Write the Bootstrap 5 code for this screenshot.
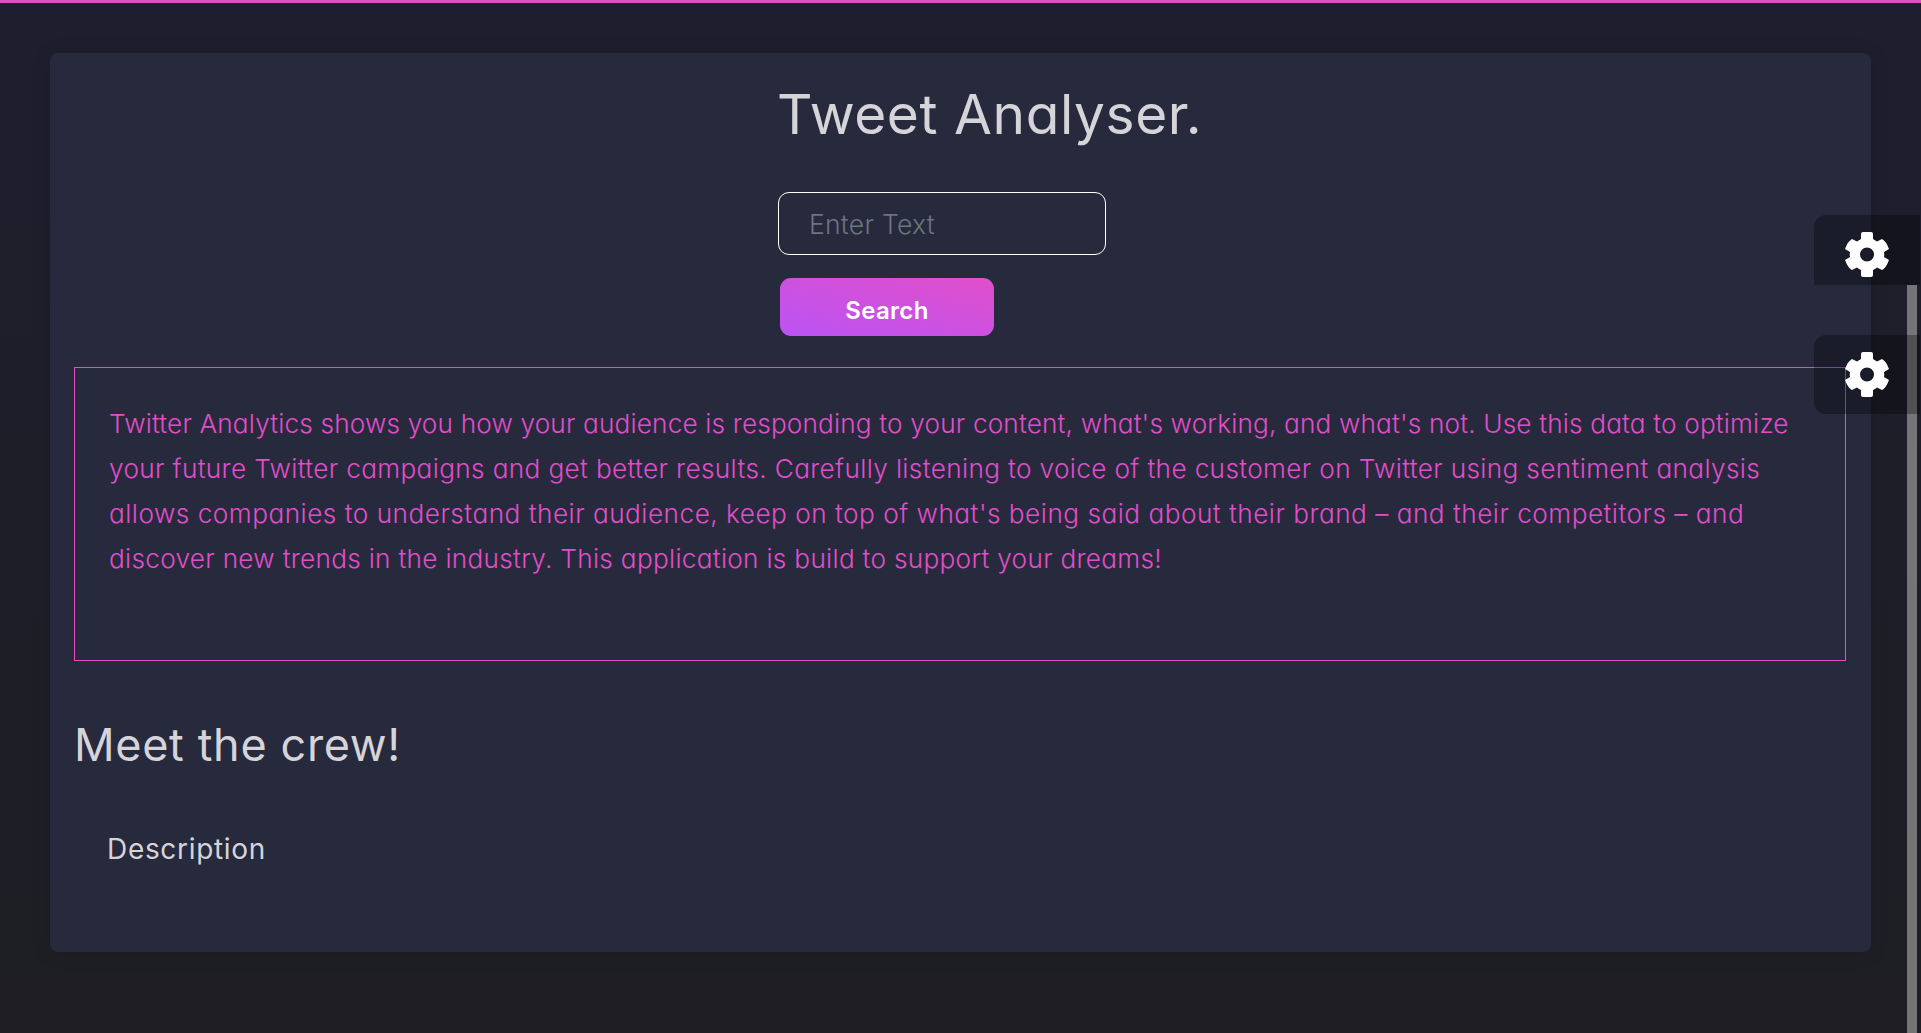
<!DOCTYPE html>
<html lang="en">
<head>
<meta charset="utf-8">
<meta name="viewport" content="width=device-width, initial-scale=1">
<title>Tweet Analyser</title>
<link href="https://cdn.jsdelivr.net/npm/bootstrap@5.3.0/dist/css/bootstrap.min.css" rel="stylesheet">
<style>
html,body{height:100%}
body{margin:0;overflow:hidden;background:#1e1e2c;font-family:Inter,"Open Sans",sans-serif;font-feature-settings:"cv11";color:#d5d4d9}
.main-panel{height:1033px;padding:50px 50px 0;border-top:3px solid #e14eca;background:linear-gradient(#1f1e2e,#1e1e24)}
.panel-card{height:899px;background:#27293d;border:0;border-radius:8px;box-shadow:0 1px 20px rgba(0,0,0,.1);padding:0 25px 0 24px;color:inherit}
.search-area{margin-left:704px;height:314px;padding-top:29px}
.title-main{font-size:55px;font-weight:400;line-height:64px;margin:0 0 46px -1px;letter-spacing:.57px}
.field-text,.field-text:focus{width:328px;height:63px;border:1px solid #fff;border-radius:11px;background:transparent;color:#fff;font-size:26.5px;font-weight:300;padding:0 30px;letter-spacing:.25px}
.field-text::placeholder{color:#6c757d;opacity:1}
.btn-search{width:214px;height:58px;margin:23px 0 0 2px;border:0;border-radius:11px;font-size:24px;font-weight:600;color:#fff;padding:8px 0 0;letter-spacing:.3px;background:linear-gradient(to bottom left,#e14eca,#ba54f5)}
.about-box{height:294px;border:1px solid #e14eca;padding:33px 34px 0;color:#e14eca;font-size:26.2px;font-weight:300;line-height:45px}
.about-box span{white-space:nowrap;align-self:flex-start}
.line-a{letter-spacing:.16px}
.line-b{letter-spacing:.35px}
.line-c{letter-spacing:.49px}
.line-d{letter-spacing:.29px}
.crew-title{font-size:45px;font-weight:400;line-height:52px;margin:58px 0 0;letter-spacing:.65px}
.crew-desc{font-size:28px;font-weight:400;line-height:36px;margin:60px 0 0 33px;letter-spacing:.68px}
.gear-tab{position:absolute;z-index:3;left:1814px;width:106px;background:rgba(0,0,0,.3);padding:17px 0 0 31px}
.gear-a{top:215px;height:70px;border-radius:12px 0 0 1px}
.gear-b{top:335px;height:79px;border-radius:12px 0 0 12px}
.gear-tab svg{display:block}
.scroll-thumb{position:absolute;z-index:2;left:1907px;top:285px;width:10px;height:748px;background:#757477}
</style>
<script src="https://cdn.jsdelivr.net/npm/bootstrap@5.3.0/dist/js/bootstrap.bundle.min.js"></script>
</head>
<body class="position-relative">
<main class="main-panel">
  <section class="card panel-card">
    <form class="search-area d-flex flex-column align-items-start" onsubmit="return false">
      <h1 class="title-main">Tweet Analyser.</h1>
      <input class="form-control field-text" type="text" placeholder="Enter Text" aria-label="Enter Text">
      <button class="btn btn-search" type="submit">Search</button>
    </form>
    <div class="about-box d-flex flex-column">
      <span class="line-a">Twitter Analytics shows you how your audience is responding to your content, what's working, and what's not. Use this data to optimize</span>
      <span class="line-b">your future Twitter campaigns and get better results. Carefully listening to voice of the customer on Twitter using sentiment analysis</span>
      <span class="line-c">allows companies to understand their audience, keep on top of what's being said about their brand – and their competitors – and</span>
      <span class="line-d">discover new trends in the industry. This application is build to support your dreams!</span>
    </div>
    <h2 class="crew-title">Meet the crew!</h2>
    <p class="crew-desc">Description</p>
  </section>
</main>
<div class="scroll-thumb"></div>
<div class="gear-tab gear-a"><svg width="44" height="45" viewBox="0 0 44 45" aria-hidden="true"><path fill="#fff" fill-rule="evenodd" d="M16 2Q16 0 18 0H26Q28 0 28 2V7Q30 8 32 9.500L37 7Q41 9 44 17L39 20Q39.500 22.500 39 25L44 28Q41 36 37 38L32 35.500Q30 37 28 38V43Q28 45 26 45H18Q16 45 16 43V38Q14 37 12 35.500L7 38Q3 36 0 28L5 25Q4.500 22.500 5 20L0 17Q3 9 7 7L12 9.500Q14 8 16 7ZM22 15.500A7 7 0 1 0 22 29.500A7 7 0 1 0 22 15.500Z"/></svg></div>
<div class="gear-tab gear-b"><svg width="44" height="45" viewBox="0 0 44 45" aria-hidden="true"><path fill="#fff" fill-rule="evenodd" d="M16 2Q16 0 18 0H26Q28 0 28 2V7Q30 8 32 9.500L37 7Q41 9 44 17L39 20Q39.500 22.500 39 25L44 28Q41 36 37 38L32 35.500Q30 37 28 38V43Q28 45 26 45H18Q16 45 16 43V38Q14 37 12 35.500L7 38Q3 36 0 28L5 25Q4.500 22.500 5 20L0 17Q3 9 7 7L12 9.500Q14 8 16 7ZM22 15.500A7 7 0 1 0 22 29.500A7 7 0 1 0 22 15.500Z"/></svg></div>
</body>
</html>
